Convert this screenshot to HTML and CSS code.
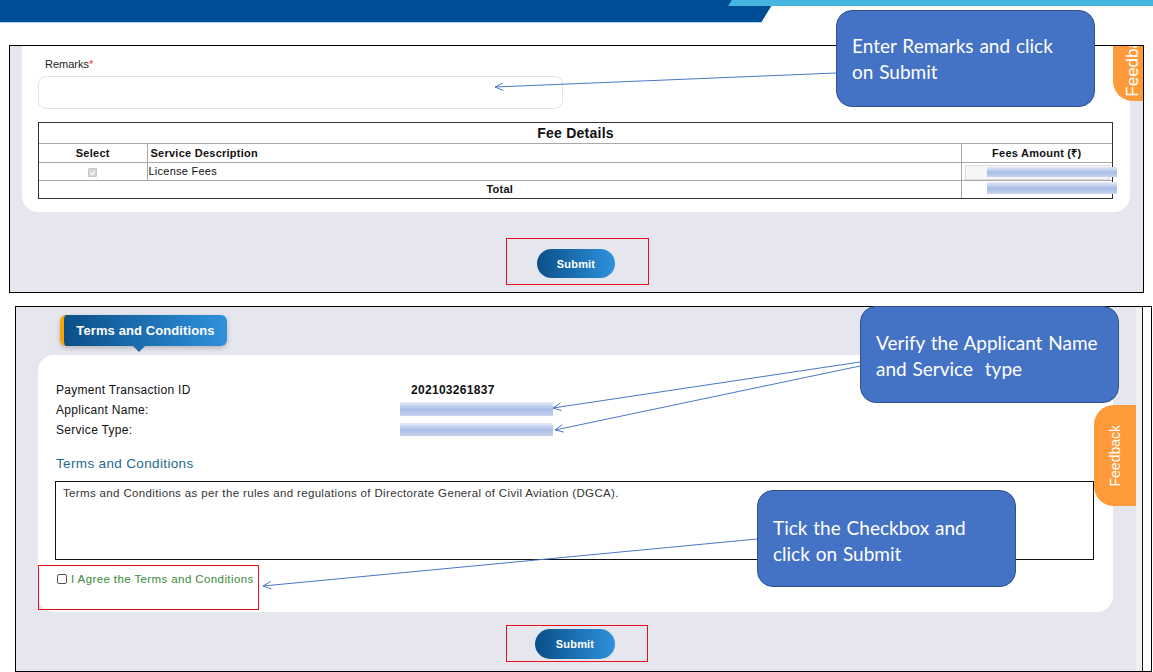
FILE: index.html
```html
<!DOCTYPE html>
<html lang="en">
<head>
<meta charset="utf-8">
<title>Terms and Conditions</title>
<link rel="stylesheet" href="styles.css">
</head>
<body>
<header class="topbar">
  <div class="band-dark"></div>
  <div class="band-light"></div>
</header>

<section class="shot shot-1">
  <div class="card card-top">
    <label class="field-label">Remarks<span class="req">*</span></label>
    <div class="text-input"></div>
    <div class="fee-wrap">
      <table class="fee-table">
        <tr class="r-title"><th colspan="3" class="fee-title">Fee Details</th></tr>
        <tr class="r-head">
          <th class="c-select">Select</th>
          <th class="c-desc">Service Description</th>
          <th class="c-amt">Fees Amount (₹)</th>
        </tr>
        <tr class="r-item">
          <td class="c-select center"><span class="cb-disabled"><svg viewBox="0 0 10 10" width="8" height="8"><path d="M2 5.2 L4.2 7.3 L8 2.8" fill="none" stroke="#fff" stroke-width="1.6"/></svg></span></td>
          <td class="c-desc item">License Fees</td>
          <td class="amt-cell"><div class="amt-input"></div><span class="redact redact-amt"></span></td>
        </tr>
        <tr class="r-total">
          <td colspan="2" class="total">Total</td>
          <td class="amt-cell"><span class="redact redact-total"></span></td>
        </tr>
      </table>
    </div>
  </div>
  <div class="highlight hl-submit-1"><button class="btn-submit">Submit</button></div>
  <div class="feedback feedback-1"><span>Feedback</span></div>
</section>

<section class="shot shot-2">
  <div class="main">
    <div class="tab-title">Terms and Conditions</div>
    <div class="card card-terms">
      <div class="info-grid">
        <span>Payment Transaction ID</span><strong class="val">202103261837</strong>
        <span>Applicant Name:</span><span class="redact redact-info"></span>
        <span>Service Type:</span><span class="redact redact-info r2"></span>
      </div>
      <h3 class="terms-heading">Terms and Conditions</h3>
      <div class="terms-box">Terms and Conditions as per the rules and regulations of Directorate General of Civil Aviation (DGCA).</div>
      <div class="highlight hl-agree">
        <label class="agree"><span class="cb"></span>I Agree the Terms and Conditions</label>
      </div>
    </div>
    <div class="highlight hl-submit-2"><button class="btn-submit btn-2">Submit</button></div>
  </div>
  <div class="scroll-rail"></div>
  <div class="feedback feedback-2"><span>Feedback</span></div>
</section>

<svg class="arrows" width="1153" height="672" viewBox="0 0 1153 672">
  <g fill="none" stroke="#4a76c6" stroke-width="1">
    <line x1="836" y1="73" x2="495" y2="87"/>
    <polyline points="503,82.9 495,87 503.3,90.5"/>
    <line x1="860" y1="362" x2="553" y2="408"/>
    <polyline points="560.5,403 553,408 561.6,410.6"/>
    <line x1="860" y1="366" x2="555" y2="430"/>
    <polyline points="562.2,424.6 555,430 563.8,432.1"/>
    <line x1="757" y1="539" x2="263" y2="586"/>
    <polyline points="270.8,581.4 263,586 271.5,589"/>
  </g>
</svg>

<div class="callout c1">Enter Remarks and click<br>on Submit</div>
<div class="callout c2">Verify the Applicant Name<br>and Service&nbsp; type</div>
<div class="callout c3">Tick the Checkbox and<br>click on Submit</div>
</body>
</html>
```

FILE: styles.css
```css
* { box-sizing: border-box; margin: 0; padding: 0; }

html, body {
  width: 1153px;
  height: 672px;
  overflow: hidden;
  background: #fff;
}

body {
  position: relative;
  font-family: "Liberation Sans", Arial, sans-serif;
  color: #222;
}

/* ---------- top decorative bar ---------- */
.topbar {
  display: flex;
  height: 23px;
}
.band-dark {
  flex: none;
  width: 775px;
  height: 23px;
  background: linear-gradient(#004e98 0 22px, #a9d3ee 22px);
  clip-path: polygon(0 0, 100% 0, calc(100% - 14px) 100%, 0 100%);
}
.band-light {
  flex: 1;
  height: 6px;
  margin-left: -47px;
  background: #45b6df;
  clip-path: polygon(4px 0, 100% 0, 100% 100%, 0 100%);
}

/* ---------- screenshot frames ---------- */
.shot {
  position: relative;
  overflow: hidden;
  border: 1px solid #000;
  background: #e6e7ee;
}

.shot-1 {
  margin: 22px 0 0 9px;
  width: 1135px;
  height: 248px;
  padding-left: 12px;
  display: flex;
  flex-direction: column;
  align-items: flex-start;
}

.card { background: #fff; }

.card-top {
  width: 1108px;
  height: 166px;
  border-radius: 0 0 16px 16px;
  padding: 11px 17px 0 16px;
}

.field-label {
  display: block;
  margin-left: 7px;
  font-size: 11px;
  line-height: 14px;
  color: #222;
}
.req { color: #e53935; }

.text-input {
  margin-top: 5px;
  width: 525px;
  height: 33px;
  border: 1px solid #e3e3e8;
  border-radius: 8px;
}

.fee-wrap {
  margin-top: 13px;
  width: 1075px;
  border: 1px solid #333;
}
.fee-table {
  width: 100%;
  border-collapse: collapse;
  border-style: hidden;
  font-size: 11px;
  letter-spacing: 0.25px;
  color: #111;
}
.fee-table th,
.fee-table td {
  border: 1px solid #a9a9a9;
  padding: 0;
  line-height: 14px;
}
.fee-title {
  height: 20px;
  font-size: 14px;
  text-align: center;
}
.r-head th { height: 19px; }
.r-item td { height: 18px; }
.r-total td { height: 18px; }

.c-select { width: 108px; text-align: center; }
.c-desc { text-align: left; padding-left: 3px !important; }
.c-desc.item { padding-left: 1px !important; }
.c-amt { width: 151px; text-align: center; }
.total { text-align: center; font-weight: bold; }

.cb-disabled {
  display: inline-flex;
  align-items: center;
  justify-content: center;
  width: 9px;
  height: 9px;
  margin-top: 1px;
  background: #d6d6d6;
  border: 1px solid #c6c6c6;
  border-radius: 1px;
  vertical-align: middle;
}

.amt-cell { position: relative; }
.amt-input {
  position: absolute;
  left: 3px;
  top: 2px;
  width: 145px;
  height: 15px;
  background: #f6f6f6;
  border: 1px solid #dcdcdc;
}

.redact {
  display: block;
  background: linear-gradient(#e4eaf7, #a8bce6 55%, #c8d4ef);
}
.redact-amt,
.redact-total {
  position: absolute;
  left: 25px;
  width: 130px;
}
.redact-amt { top: 4px; height: 10px; }
.redact-total { top: 1px; height: 12px; }

/* ---------- highlights / buttons ---------- */
.highlight { border: 1px solid #e8101a; }

.hl-submit-1 {
  margin: 26px 0 0 484px;
  width: 143px;
  height: 47px;
  padding: 10px 0 0 30px;
  display: flex;
  align-items: flex-start;
}

.btn-submit {
  width: 78px;
  height: 29px;
  border: none;
  border-radius: 15px;
  background: linear-gradient(90deg, #0a4f87, #2e92de);
  color: #fff;
  font-family: "Liberation Sans", Arial, sans-serif;
  font-weight: bold;
  font-size: 11px;
  letter-spacing: 0.2px;
}
.btn-2 { width: 80px; height: 30px; }

/* ---------- feedback tabs ---------- */
.feedback {
  position: absolute;
  background: #ff9a3a;
  color: #fff;
  display: flex;
  justify-content: center;
}
.feedback span {
  writing-mode: vertical-rl;
  transform: rotate(180deg);
  font-size: 14px;
}
.feedback-1 {
  left: 1103px;
  top: -46px;
  width: 30px;
  height: 101px;
  border-radius: 0 0 0 20px;
  align-items: flex-end;
  padding-left: 9px;
  padding-bottom: 4px;
}
.feedback-1 span { font-size: 17px; }
.feedback-2 {
  left: 1078px;
  top: 98px;
  width: 42px;
  height: 101px;
  border-radius: 20px 0 0 20px;
  align-items: center;
}

/* ---------- second screenshot ---------- */
.shot-2 {
  margin: 13px 0 0 15px;
  width: 1137px;
  height: 366px;
  display: flex;
}
.shot-2 .main {
  flex: 1;
  padding-left: 22px;
  display: flex;
  flex-direction: column;
  align-items: flex-start;
}
.scroll-rail {
  flex: none;
  width: 15px;
  background: linear-gradient(90deg, #f0f0f2 0 6px, #1a1a1a 6px 7px, #fff 7px);
}

.tab-title {
  position: relative;
  margin: 8px 0 0 22px;
  width: 167px;
  height: 31px;
  border-left: 4px solid #f5a400;
  border-radius: 6px;
  background: linear-gradient(90deg, #0b4f88, #2f91dc);
  box-shadow: 0 2px 5px rgba(0, 0, 0, 0.22);
  color: #fff;
  font-weight: bold;
  font-size: 13px;
  letter-spacing: 0.1px;
  line-height: 31px;
  text-align: center;
}
.tab-title::after {
  content: "";
  position: absolute;
  left: 69px;
  bottom: -6px;
  border-left: 6px solid transparent;
  border-right: 6px solid transparent;
  border-top: 6px solid #1a69a8;
}

.card-terms {
  margin-top: 9px;
  width: 1075px;
  height: 257px;
  border-radius: 16px;
  padding: 25px 18px 2px;
}

.info-grid {
  display: grid;
  grid-template-columns: 344px 153px;
  font-size: 12px;
  letter-spacing: 0.3px;
  line-height: 20px;
  color: #111;
}
.val { padding-left: 11px; }
.redact-info {
  height: 14px;
  margin-top: 2px;
}
.redact-info.r2 { margin-top: 3px; height: 13px; }

.terms-heading {
  margin-top: 16px;
  font-size: 13.5px;
  letter-spacing: 0.35px;
  font-weight: normal;
  line-height: 16px;
  color: #1f6a8c;
}

.terms-box {
  margin: 9px 0 0 -1px;
  width: 1039px;
  height: 79px;
  border: 1px solid #111;
  padding: 4px 7px;
  font-size: 11.5px;
  letter-spacing: 0.35px;
  line-height: 14px;
  color: #333;
}

.hl-agree {
  margin: 5px 0 0 -18px;
  width: 221px;
  height: 45px;
  padding: 6px 0 0 18px;
}
.agree {
  display: flex;
  align-items: center;
  gap: 4px;
  font-size: 11.5px;
  letter-spacing: 0.4px;
  line-height: 14px;
  color: #3b8a3b;
}
.cb {
  width: 10px;
  height: 10px;
  border: 1px solid #555;
  border-radius: 2px;
  background: #fff;
}

.hl-submit-2 {
  margin: 13px 0 0 468px;
  width: 142px;
  height: 37px;
  padding: 3px 0 0 28px;
  display: flex;
  align-items: flex-start;
}

/* ---------- annotation overlays ---------- */
.arrows {
  position: absolute;
  left: 0;
  top: 0;
  pointer-events: none;
}

.callout {
  position: absolute;
  width: 259px;
  height: 97px;
  padding-left: 15px;
  background: #4472c4;
  border: 1.5px solid #2f528f;
  border-radius: 16px;
  color: #fff;
  font-family: Lato, "Open Sans", sans-serif;
  font-size: 19px;
  line-height: 26px;
  word-spacing: 1px;
}
.c1 { left: 836px; top: 10px; padding-top: 22px; }
.c2 { left: 860px; top: 306px; padding-top: 23px; }
.c3 { left: 757px; top: 490px; padding-top: 24px; }
```
